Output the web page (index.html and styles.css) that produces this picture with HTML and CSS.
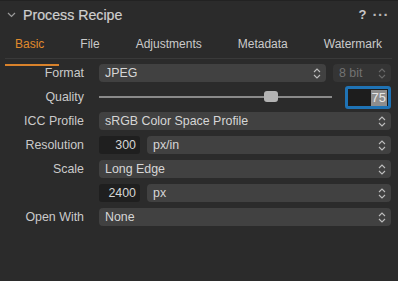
FILE: index.html
```html
<!DOCTYPE html>
<html lang="en">
<head>
  <meta charset="UTF-8">
  <title>Process Recipe</title>
  <link rel="stylesheet" href="styles.css">
</head>
<body>

  <div class="panel">
    <!-- Header -->
    <div class="header">
      <svg class="collapse" width="9" height="6" viewBox="0 0 9 6"><path d="M1 1 L4.5 4.5 L8 1" fill="none" stroke="#9a9a9a" stroke-width="1.2"/></svg>
      <span class="title">Process Recipe</span>
      <span class="help">?</span>
      <span class="more">&middot;&middot;&middot;</span>
    </div>

    <!-- Tabs -->
    <div class="tabs">
      <span class="tab active">Basic</span>
      <span class="tab">File</span>
      <span class="tab">Adjustments</span>
      <span class="tab">Metadata</span>
      <span class="tab">Watermark</span>
    </div>

    <!-- Settings -->
    <div class="form">
      <label>Format</label>
      <div class="split">
        <div class="select grow">JPEG <svg class="updown" width="8" height="13" viewBox="0 0 8 13"><path d="M1 5 L4 2 L7 5 M1 8 L4 11 L7 8" fill="none" stroke="#bdbdbd" stroke-width="1.1"/></svg></div>
        <div class="select bits disabled">8 bit <svg class="updown" width="8" height="13" viewBox="0 0 8 13"><path d="M1 5 L4 2 L7 5 M1 8 L4 11 L7 8" fill="none" stroke="#6a6a6a" stroke-width="1.1"/></svg></div>
      </div>

      <label>Quality</label>
      <div class="split quality">
        <div class="slider"><div class="thumb"></div></div>
        <div class="qinput"><span class="sel">75</span></div>
      </div>

      <label>ICC Profile</label>
      <div class="select">sRGB Color Space Profile <svg class="updown" width="8" height="13" viewBox="0 0 8 13"><path d="M1 5 L4 2 L7 5 M1 8 L4 11 L7 8" fill="none" stroke="#bdbdbd" stroke-width="1.1"/></svg></div>

      <label>Resolution</label>
      <div class="split">
        <div class="number">300</div>
        <div class="select grow">px/in <svg class="updown" width="8" height="13" viewBox="0 0 8 13"><path d="M1 5 L4 2 L7 5 M1 8 L4 11 L7 8" fill="none" stroke="#bdbdbd" stroke-width="1.1"/></svg></div>
      </div>

      <label>Scale</label>
      <div class="select">Long Edge <svg class="updown" width="8" height="13" viewBox="0 0 8 13"><path d="M1 5 L4 2 L7 5 M1 8 L4 11 L7 8" fill="none" stroke="#bdbdbd" stroke-width="1.1"/></svg></div>

      <label></label>
      <div class="split">
        <div class="number">2400</div>
        <div class="select grow">px <svg class="updown" width="8" height="13" viewBox="0 0 8 13"><path d="M1 5 L4 2 L7 5 M1 8 L4 11 L7 8" fill="none" stroke="#bdbdbd" stroke-width="1.1"/></svg></div>
      </div>

      <label>Open With</label>
      <div class="select">None <svg class="updown" width="8" height="13" viewBox="0 0 8 13"><path d="M1 5 L4 2 L7 5 M1 8 L4 11 L7 8" fill="none" stroke="#bdbdbd" stroke-width="1.1"/></svg></div>
    </div>
  </div>

</body>
</html>
```

FILE: styles.css
```css
body {
  margin: 0;
  background: #2b2b2b;
  font-family: "Liberation Sans", Arial, sans-serif;
  color: #cfcfcf;
}
.panel {
  width: 398px;
  height: 281px;
  background: #2b2b2b;
  border-top: 1px solid #222;
  box-sizing: border-box;
}
.header {
  display: flex;
  align-items: center;
  height: 27px;
  padding: 0 9px 0 7px;
}
.collapse {
  margin-right: 7px;
  margin-top: 1px;
}
.title {
  font-size: 14.2px;
  color: #cfcfcf;
  flex: 1;
  -webkit-text-stroke: 0.2px #cfcfcf;
}
.help {
  font-size: 13px;
  font-weight: bold;
  color: #c8c8c8;
  margin-right: 6px;
}
.more {
  font-size: 15px;
  font-weight: bold;
  color: #b5b5b5;
  letter-spacing: 0.5px;
}
.tabs {
  display: flex;
  gap: 36px;
  margin: 0 6px 0 5px;
  padding: 9px 0 0 10px;
  height: 21px;
  border-bottom: 1px solid #3a3a3a;
  font-size: 12px;
  color: #cacaca;
}
.tab {
  position: relative;
}
.tab.active {
  color: #e08a2c;
}
.tab.active::after {
  content: "";
  position: absolute;
  left: -10px;
  right: -15px;
  bottom: -8px;
  height: 2px;
  background: #d9822b;
}
.form {
  display: grid;
  grid-template-columns: 84px 1fr;
  grid-auto-rows: 24px;
  column-gap: 15px;
  padding: 2px 7px 0 0;
  align-items: center;
  font-size: 12px;
}
.form > label {
  text-align: right;
  color: #cacaca;
  font-size: 12.4px;
}
.split {
  display: flex;
  gap: 7px;
  align-items: center;
}
.grow {
  flex: 1;
}
.select {
  position: relative;
  height: 18px;
  line-height: 18px;
  background: #414141;
  border-radius: 4px;
  padding-left: 6px;
  color: #d6d6d6;
  font-size: 12.4px;
}
.updown {
  position: absolute;
  right: 5px;
  top: 3px;
}
.bits {
  width: 58px;
  box-sizing: border-box;
}
.disabled {
  background: #353535;
  color: #727272;
}
.number {
  width: 41px;
  height: 18px;
  line-height: 18px;
  background: #1f1f1f;
  border-radius: 3px;
  text-align: right;
  padding-right: 4px;
  box-sizing: border-box;
  color: #d6d6d6;
  font-size: 12.4px;
}
.quality {
  gap: 13px;
}
.slider {
  position: relative;
  flex: 1;
  height: 2px;
  background: #8a8a8a;
}
.thumb {
  position: absolute;
  left: 165px;
  top: -5px;
  width: 14px;
  height: 11px;
  border-radius: 3px;
  background: #b3b3b3;
}
.qinput {
  width: 46px;
  height: 23px;
  box-sizing: border-box;
  border: 3px solid #1f73b5;
  border-radius: 3px;
  background: #1d1d1d;
  text-align: right;
  padding: 1px 1px 0 0;
}
.sel {
  display: inline-block;
  background: #8d8d8d;
  color: #e6e6e6;
  font-size: 13px;
  line-height: 16px;
  padding: 0 1px;
}
```
